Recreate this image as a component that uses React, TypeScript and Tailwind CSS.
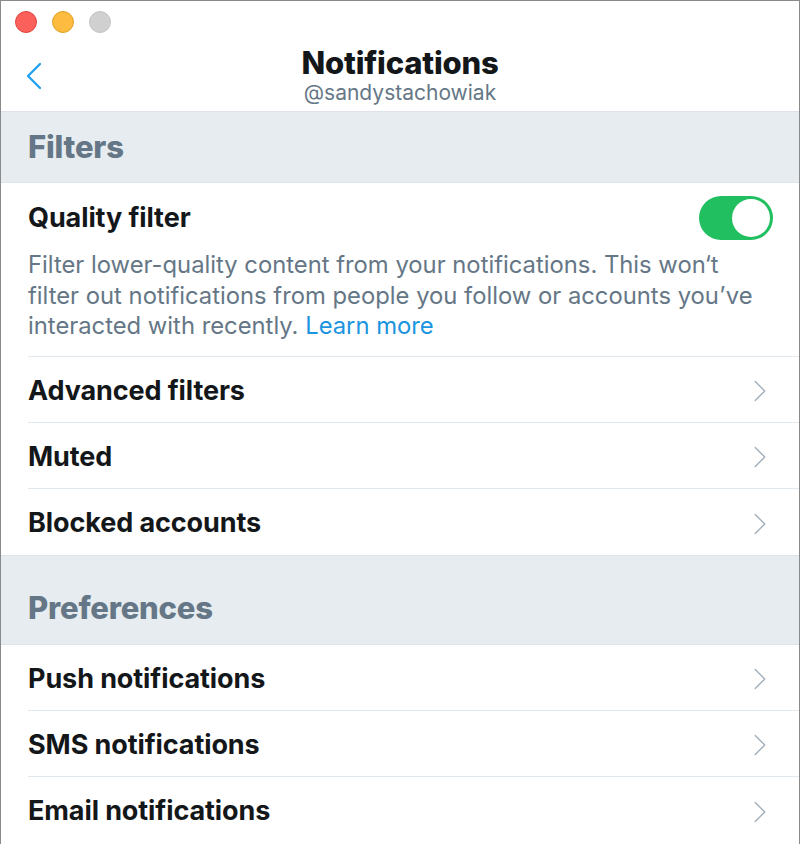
import { ChevronLeft, ChevronRight } from 'lucide-react'

const font = { fontFamily: 'Inter, "Noto Sans", sans-serif' }

const Row = ({ label, last }: { label: string; last?: boolean }) => (
  <div className="pl-[27px]">
    <div className={`flex h-[66px] items-center justify-between pr-[20px] pt-[4px] ${last ? '' : 'border-b border-[#e1e8ed]'}`}>
      <span className="text-[27px] font-bold tracking-[-0.1px] text-[#14171a]">{label}</span>
      <ChevronRight className="h-[38px] w-[38px] text-[#a4b0ba]" strokeWidth={0.9} />
    </div>
  </div>
)

const Section = ({ title, tall }: { title: string; tall?: boolean }) => (
  <div className={`flex ${tall ? 'h-[90px] pt-[18px]' : 'h-[72px]'} items-center border-y border-[#dde3e8] bg-[#e6ecf0] pl-[27px]`}>
    <span className="text-[31px] font-extrabold tracking-[-0.2px] text-[#657786]">{title}</span>
  </div>
)

export default function App() {
  return (
    <div style={font} className="h-[844px] w-[800px] overflow-hidden border-x border-t border-[#8a8a8a] bg-white">
      {/* Title bar */}
      <div className="flex h-[40px] items-center gap-[15px] pl-[14px] pt-[1px]">
        <span className="h-[22px] w-[22px] rounded-full border border-[#e0443e] bg-[#fc605b]" />
        <span className="h-[22px] w-[22px] rounded-full border border-[#dea123] bg-[#fdbc40]" />
        <span className="h-[22px] w-[22px] rounded-full border border-[#c4c4c4] bg-[#d0d0d0]" />
      </div>

      {/* Nav header */}
      <div className="relative flex h-[70px] flex-col items-center justify-start">
        <ChevronLeft className="absolute left-[9px] top-[11px] h-[48px] w-[48px] text-[#1da1f2]" strokeWidth={1.15} />
        <span className="mt-[3px] text-[31px] font-extrabold leading-[37px] tracking-[-0.2px] text-[#14171a]">Notifications</span>
        <span className="text-[21px] leading-[24px] text-[#657786]">@sandystachowiak</span>
      </div>

      <Section title="Filters" />

      {/* Quality filter */}
      <div className="pl-[27px]">
        <div className="border-b border-[#e1e8ed] pb-[14px]">
          <div className="flex h-[70px] items-center justify-between pr-[26px]">
            <span className="text-[27px] font-bold tracking-[-0.1px] text-[#14171a]">Quality filter</span>
            <div className="flex h-[44px] w-[74px] items-center justify-end rounded-full bg-[#21bf60] p-[3px]">
              <div className="h-[38px] w-[38px] rounded-full bg-white" />
            </div>
          </div>
          <p className="-mt-[3px] max-w-[738px] text-[23.8px] leading-[30.5px] text-[#657786]">
            Filter lower-quality content from your notifications. This won‘t filter out notifications from people you follow or accounts you’ve interacted with recently.{' '}
            <a className="text-[#1b95e0]">Learn more</a>
          </p>
        </div>
      </div>

      <Row label="Advanced filters" />
      <Row label="Muted" />
      <Row label="Blocked accounts" last />

      <Section title="Preferences" tall />

      <Row label="Push notifications" />
      <Row label="SMS notifications" />
      <Row label="Email notifications" last />
    </div>
  )
}
